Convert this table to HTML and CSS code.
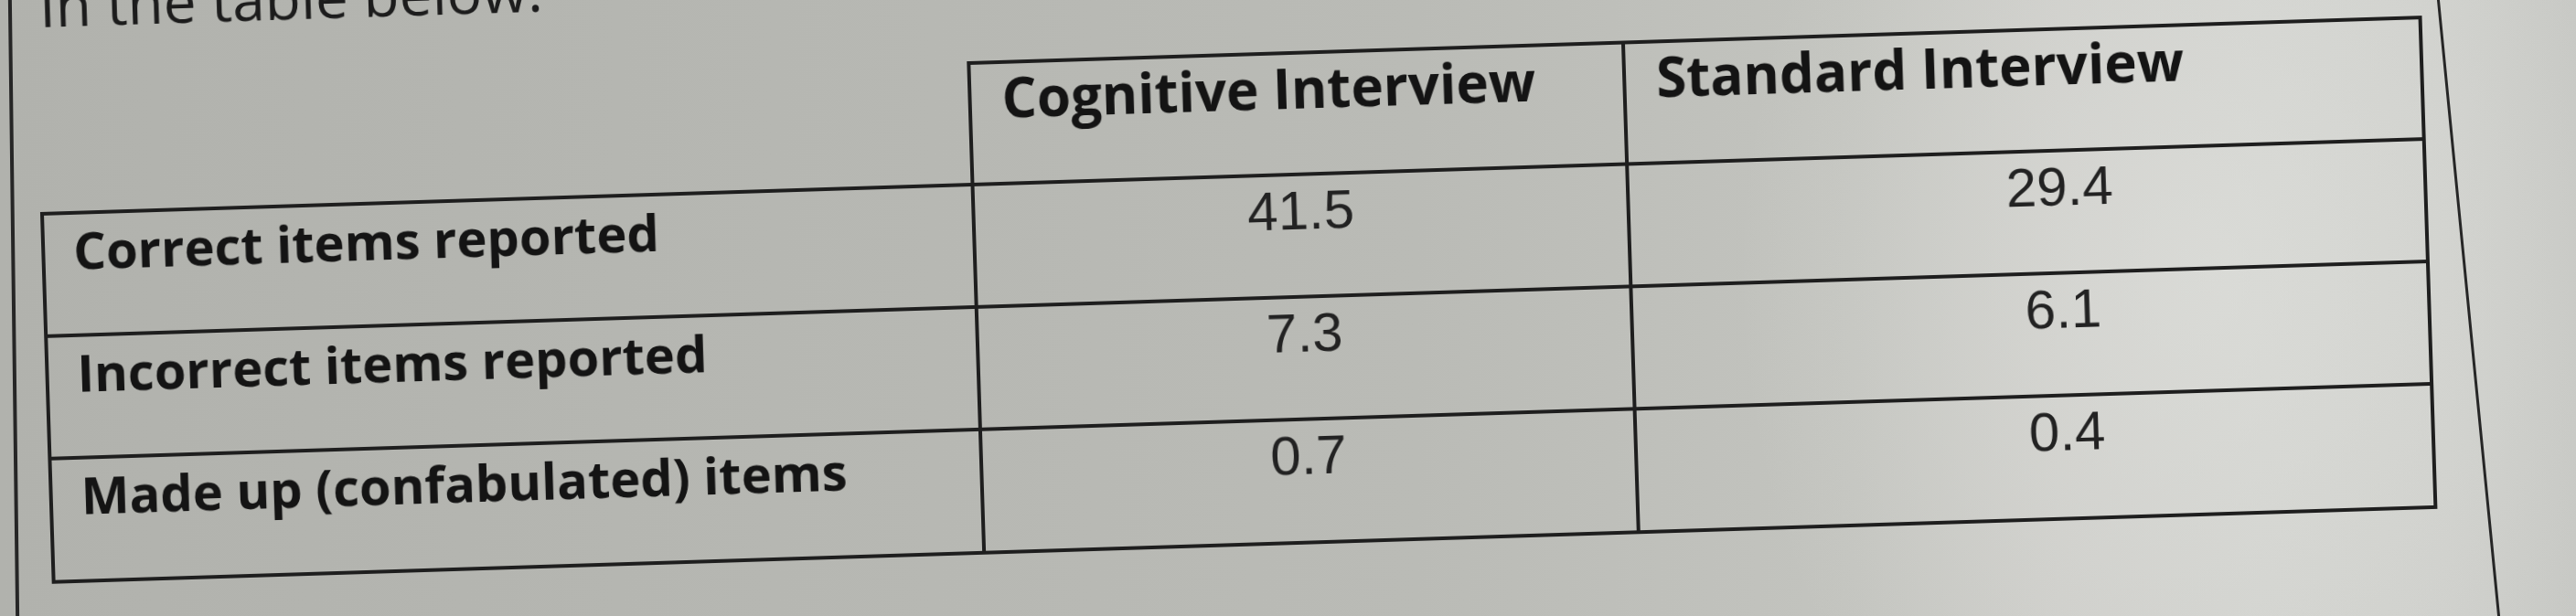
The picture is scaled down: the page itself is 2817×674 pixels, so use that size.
FILE: index.html
```html
<!DOCTYPE html>
<html lang="en">
<head>
<meta charset="utf-8">
<title>Cognitive vs Standard Interview</title>
<link rel="stylesheet" href="styles.css">
</head>
<body>
<div class="photo">
  <div class="page-edge page-edge-left"></div>
  <div class="sheet">
    <p class="intro">In the table below:</p>
    <div class="results" role="table">
      <div class="cell corner" role="columnheader"></div>
      <div class="cell head" role="columnheader">Cognitive Interview</div>
      <div class="cell head" role="columnheader">Standard Interview</div>

      <div class="cell label" role="rowheader">Correct items reported</div>
      <div class="cell value" role="cell">41.5</div>
      <div class="cell value value-std" role="cell">29.4</div>

      <div class="cell label" role="rowheader">Incorrect items reported</div>
      <div class="cell value" role="cell">7.3</div>
      <div class="cell value value-std" role="cell">6.1</div>

      <div class="cell label" role="rowheader">Made up (confabulated) items</div>
      <div class="cell value" role="cell">0.7</div>
      <div class="cell value value-std" role="cell">0.4</div>
    </div>
  </div>
  <div class="page-edge page-edge-right"></div>
</div>
</body>
</html>
```

FILE: styles.css
```css
html, body {
  margin: 0;
  padding: 0;
  width: 2817px;
  height: 674px;
  overflow: hidden;
}

.photo {
  box-sizing: border-box;
  width: 2817px;
  height: 674px;
  display: flex;
  align-items: flex-start;
  padding-left: 13px;
  overflow: hidden;
  background:
    radial-gradient(ellipse 520px 700px at 2420px 300px, rgba(226, 227, 223, 0.55), rgba(226, 227, 223, 0) 100%),
    linear-gradient(to right, #b1b2ad 0%, #b6b7b2 30%, #babbb6 55%, #c3c4bf 72%, #ccccc8 80%, #d0d1cd 88%, #cdceca 95%, #c6c7c3 100%);
}

.page-edge {
  flex: none;
  width: 4px;
  height: 760px;
  align-self: center;
  background: #262626;
  filter: blur(0.6px);
}

.page-edge-left {
  transform: rotate(-0.7deg);
}

.page-edge-right {
  width: 3px;
  margin-left: 44px;
  transform: rotate(-5.6deg);
}

.sheet {
  flex: none;
  margin-left: 27px;
  margin-top: -38px;
  transform: rotate(-1.8deg);
  transform-origin: 0 272px;
  filter: blur(0.6px);
}

.intro {
  margin: 0 0 50px;
  padding-left: 6px;
  font-family: "Open Sans", "Liberation Sans", sans-serif;
  font-weight: 400;
  font-size: 64px;
  line-height: 87px;
  color: #1c1c1c;
  white-space: nowrap;
}

.results {
  display: grid;
  grid-template-columns: 1022px 716px 872px;
  grid-template-rows: 137px 134px 134px 135px;
  color: #141414;
}

.cell {
  box-sizing: border-box;
  border-right: 4px solid #1e1e1e;
  border-bottom: 4px solid #1e1e1e;
  white-space: nowrap;
}

.head {
  border-top: 4px solid #1e1e1e;
  padding-left: 33px;
  font-family: "Open Sans", "Liberation Sans", sans-serif;
  font-weight: 700;
  font-size: 60px;
  line-height: 72px;
}

.label {
  border-left: 4px solid #1e1e1e;
  padding: 4px 0 0 31px;
  font-family: "Open Sans", "Liberation Sans", sans-serif;
  font-weight: 700;
  font-size: 56px;
  line-height: 68px;
}

.value {
  padding-top: 2px;
  text-align: center;
  font-family: "Liberation Sans", Arial, sans-serif;
  font-weight: 400;
  font-size: 60px;
  line-height: 72px;
  color: #222222;
}

.value-std {
  padding-left: 72px;
}
```
